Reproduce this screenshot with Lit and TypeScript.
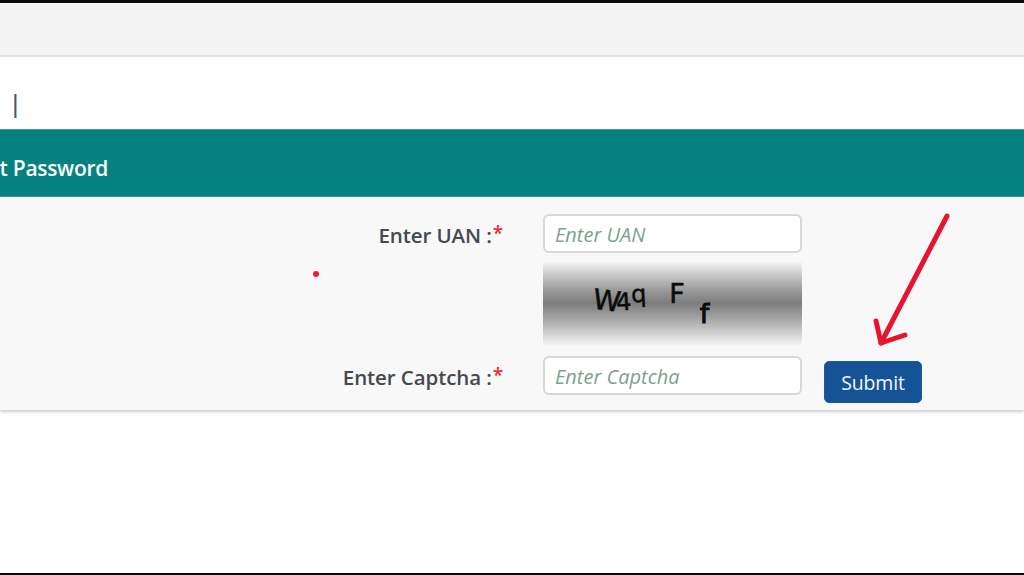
import { LitElement, html, css } from "lit";
import { customElement } from "lit/decorators.js";

@customElement("app-root")
export class AppRoot extends LitElement {
  static styles = css`
    :host { display: block; width: 1024px; height: 575px; overflow: hidden; position: relative; background: #fff;
      font-family: "Open Sans", "Noto Sans", sans-serif; box-sizing: border-box; border-top: 3px solid #0a0a0a; border-bottom: 2px solid #0a0a0a; }
    * { box-sizing: border-box; }
    .top { height: 54px; background: #f4f4f4; border-bottom: 2px solid #e2e2e2; }
    .crumb { height: 72px; padding: 30px 0 0 9px; font-size: 23px; line-height: 32px; font-weight: 600; color: #46566a; }
    .head { height: 68px; background: #048180; border-top: 1px solid #3a9c9b; border-bottom: 1px solid #3a9c9b; display: flex; align-items: center; overflow: hidden; padding-top: 10px; }
    .title { width: 108px; display: flex; justify-content: flex-end; white-space: nowrap; color: #fff; font-size: 21px; font-weight: 600; letter-spacing: -0.3px; flex: none; }
    .panel { height: 213px; background: #f8f8f8; box-shadow: 0 2px 3px rgba(0,0,0,.2); display: grid;
      grid-template-columns: 543px 259px auto; padding: 17px 0 0 0; grid-template-rows: 39px 87px 39px; row-gap: 8px; align-content: start; }
    .label { display: flex; justify-content: flex-end; align-items: center; padding: 2px 40px 0 0; font-size: 20.5px; font-weight: 600; letter-spacing: -0.1px; color: #46494f; white-space: nowrap; }
    .req { color: #f0262f; font-weight: 600; font-size: 19px; position: relative; top: -2px; margin-left: 1px; }
    .field { grid-column: 2; }
    .row-a { grid-row: 1; } .row-b { grid-row: 2; } .row-c { grid-row: 3; }
    .input { display: block; width: 259px; height: 39px; border: 2px solid #d8d8d8; border-radius: 6px; background: #fff; padding: 1px 10px 0;
      font-family: inherit; font-size: 20px; font-style: italic; outline: none; margin: 0; }
    .input::placeholder { color: #7f9f90; opacity: 1; }
    .captcha { width: 259px; height: 86px; margin-top: -1px; position: relative;
      background: linear-gradient(180deg, #fbfbfb 0%, #c8c8c8 18%, #9a9a9a 35%, #7d7d7d 50%, #a0a0a0 66%, #cfcfcf 85%, #f6f6f6 100%);
      display: flex; padding: 15px 0 0 48px; color: #0b0b0b; font-family: "DejaVu Sans", sans-serif; font-size: 27px; line-height: 1; overflow: hidden; -webkit-text-stroke: 0.5px #0b0b0b; }
    .c1 { display: block; font-size: 28px; transform: rotate(7deg); margin-top: 12px; letter-spacing: -1px; }
    .c2 { display: block; transform: rotate(-3deg); font-size: 24px; margin-top: 15px; margin-left: -1px; }
    .c3 { display: block; transform: rotate(-3deg); font-size: 24px; margin-top: 7px; margin-left: 0; }
    .c4 { display: block; margin-left: 22px; margin-top: 5px; font-size: 27px; }
    .c5 { display: block; margin-left: 15px; margin-top: 25px; font-weight: 400; font-size: 27px; -webkit-text-stroke: 1px #0b0b0b; }
    .btn { grid-column: 3; grid-row: 3; width: 98px; height: 42px; margin: 5px 0 0 22px; background: #155296; border: 1px solid #1d5a9e; border-radius: 5px; color: #f4f7fb;
      font-family: inherit; font-size: 19.5px; padding: 0; letter-spacing: -0.2px; }
    .dot { position: absolute; left: 313px; top: 268px; width: 6px; height: 6px; border-radius: 50%; background: #ec1c3a; }
    .arrow { position: absolute; left: 860px; top: 197px; width: 100px; height: 150px; overflow: visible; }
  `;

  render() {
    return html`
      <div class="top"></div>
      <div class="crumb">|</div>
      <div class="head"><div class="title">Forgot Password</div></div>
      <div class="panel">
        <div class="label row-a">Enter UAN :<span class="req">*</span></div>
        <div class="field row-a"><input class="input" placeholder="Enter UAN" /></div>
        <div class="field row-b">
          <div class="captcha">
            <span class="c1">W</span><span class="c2">4</span><span class="c3">q</span><span class="c4">F</span><span class="c5">f</span>
          </div>
        </div>
        <div class="label row-c">Enter Captcha :<span class="req">*</span></div>
        <div class="field row-c"><input class="input" placeholder="Enter Captcha" /></div>
        <button class="btn">Submit</button>
      </div>
      <div class="dot"></div>
      <svg class="arrow" viewBox="0 0 100 150" fill="none" stroke="#e8142f" stroke-width="5" stroke-linecap="round" stroke-linejoin="round">
        <path d="M87 16 L21 143" />
        <path d="M16 121 L21 143 L45 135" />
      </svg>
    `;
  }
}
